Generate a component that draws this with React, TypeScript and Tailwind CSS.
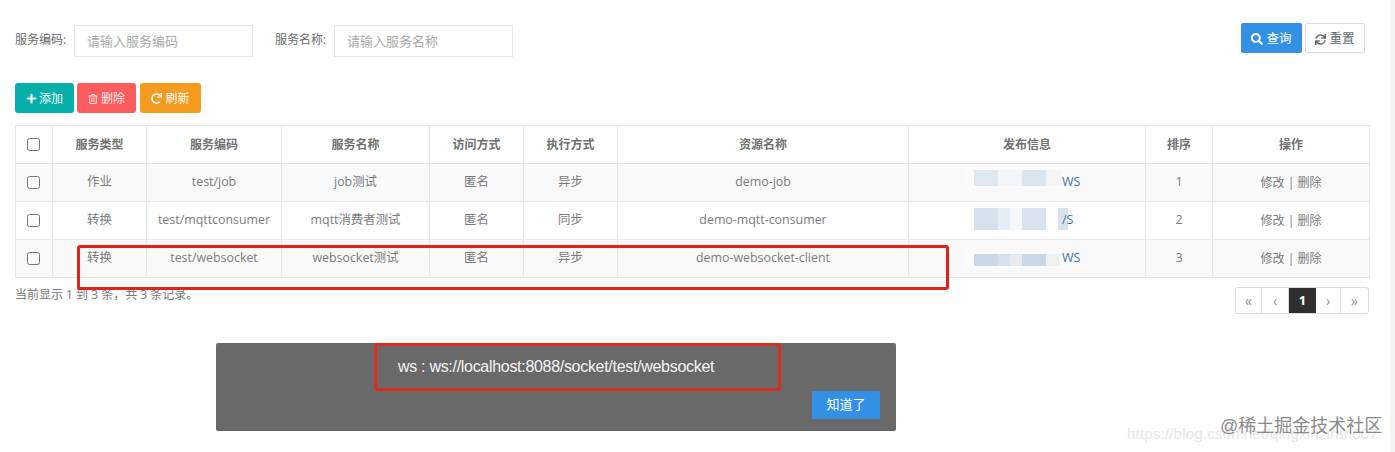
import { FaPlus, FaRegTrashAlt, FaRedo, FaSearch, FaSync } from "react-icons/fa";

const headers = ["服务类型", "服务编码", "服务名称", "访问方式", "执行方式", "资源名称", "发布信息", "排序", "操作"];
const widths = ["w-[37px]", "w-[94px]", "w-[135px]", "w-[148px]", "w-[94px]", "w-[94px]", "w-[291px]", "w-[237px]", "w-[67px]", "w-[157px]"];

type Seg = [string, string];
const rows: { c: string[]; n: number; top: string; h: string; wash: string; segs: Seg[]; bg: string }[] = [
  {
    c: ["作业", "test/job", "job测试", "匿名", "异步", "demo-job"],
    n: 1,
    top: "top-[6px]",
    h: "h-[16px]",
    wash: "top-0 h-[24px]",
    bg: "bg-[#f9f9f9]",
    segs: [
      ["w-[24px]", "bg-[#dfe8f1]"],
      ["w-[24px]", "bg-[#f2f5f9]"],
      ["w-[24px]", "bg-[#dbe5ef]"],
      ["w-[16px]", "bg-[#f3f5f7]"],
    ],
  },
  {
    c: ["转换", "test/mqttconsumer", "mqtt消费者测试", "匿名", "同步", "demo-mqtt-consumer"],
    n: 2,
    top: "top-[6px]",
    h: "h-[22px]",
    wash: "top-[2px] h-[30px]",
    bg: "bg-white",
    segs: [
      ["w-[24px]", "bg-[#d5e1ec]"],
      ["w-[12px]", "bg-[#e6edf4]"],
      ["w-[12px]", "bg-[#f4f7fb]"],
      ["w-[24px]", "bg-[#d9e3ed]"],
      ["w-[12px]", "bg-white"],
      ["w-[10px]", "bg-[#d8e2ec]"],
    ],
  },
  {
    c: ["转换", "test/websocket", "websocket测试", "匿名", "异步", "demo-websocket-client"],
    n: 3,
    top: "top-[14px]",
    h: "h-[12px]",
    wash: "top-[10px] h-[18px]",
    bg: "bg-[#f9f9f9]",
    segs: [
      ["w-[24px]", "bg-[#c9d8e6]"],
      ["w-[12px]", "bg-[#d5e1ec]"],
      ["w-[12px]", "bg-[#e6ebf0]"],
      ["w-[24px]", "bg-[#c9d8e6]"],
      ["w-[14px]", "bg-[#eef0f2]"],
    ],
  },
];

function Box() {
  return <span className="block w-[13px] h-[13px] border border-[#767676] rounded-[2.5px] bg-white ml-[11px]" />;
}

function Blur({ r }: { r: (typeof rows)[number] }) {
  return (
    <div className={`absolute left-[65px] ${r.top} ${r.h} flex`}>
      {r.segs.map((s, i) => (
        <span key={i} className={`${s[0]} ${s[1]} h-full`} />
      ))}
    </div>
  );
}

export default function App() {
  return (
    <div className="relative w-[1395px] h-[452px] overflow-hidden bg-white text-[13px] text-[#676a6c] font-['Open_Sans','Noto_Sans_CJK_SC',sans-serif]">
      <div className="w-[1390px] h-full pl-[15px] pr-[21px]">
        <div className="flex items-start pt-[23px] h-[83px]">
          <div className="flex items-center pt-[2px]">
            <span className="w-[59px] text-[12px] text-[#676a6c] -mt-[3px]">服务编码:</span>
            <span className="w-[179px] h-[32px] border border-[#e5e6e7] flex items-center pl-[12px] pt-[1px] text-[#a9a9a9] text-[13px]">请输入服务编码</span>
            <span className="w-[59px] ml-[22px] text-[12px] -mt-[3px]">服务名称:</span>
            <span className="w-[179px] h-[32px] border border-[#e5e6e7] flex items-center pl-[12px] pt-[1px] text-[#a9a9a9] text-[13px]">请输入服务名称</span>
          </div>
          <div className="ml-auto flex gap-[3px] mr-[4px]">
            <button className="w-[61px] h-[30px] pt-[2px] rounded-[2px] bg-[#3390e4] text-white text-[12.5px] flex items-center justify-center gap-[3px]">
              <FaSearch className="w-[12px] h-[12px]" />
              查询
            </button>
            <button className="w-[60px] h-[30px] pt-[2px] rounded-[2px] border border-[#dcdcdc] bg-white text-[#676a6c] text-[12.5px] flex items-center justify-center gap-[3px]">
              <FaSync className="w-[11px] h-[11px]" />
              重置
            </button>
          </div>
        </div>

        <div className="flex mb-[12px]">
          <button className="w-[59px] h-[30px] pt-[1px] rounded-[3px] bg-[#05afaa] text-white text-[12px] flex items-center justify-center gap-[2px]">
            <FaPlus className="w-[11px] h-[11px]" />
            添加
          </button>
          <button className="w-[59px] h-[30px] pt-[1px] ml-[3px] rounded-[3px] bg-[#fc5c5d] text-[#ffe9e9] text-[12px] flex items-center justify-center gap-[3px]">
            <FaRegTrashAlt className="w-[10px] h-[10px]" />
            删除
          </button>
          <button className="w-[61px] h-[30px] pt-[1px] ml-[4px] rounded-[3px] bg-[#f59b1d] text-white text-[12px] flex items-center justify-center gap-[3px]">
            <FaRedo className="w-[11px] h-[11px]" />
            刷新
          </button>
        </div>

        <table className="w-[1354px] table-fixed border-collapse border border-[#e7e7e7] text-center">
          <colgroup>
            {widths.map((w, i) => (
              <col key={i} className={w} />
            ))}
          </colgroup>
          <thead>
            <tr className="h-[38px] border-b border-[#e2e2e2]">
              <th className="border-r border-[#e7e7e7] p-0">
                <Box />
              </th>
              {headers.map((h, i) => (
                <th key={h} className={`p-0 font-semibold text-[12px] text-[#6f7173] ${i < 8 ? "border-r border-[#e7e7e7]" : ""}`}>
                  {h}
                </th>
              ))}
            </tr>
          </thead>
          <tbody>
            {rows.map((r) => (
              <tr key={r.n} className={`h-[38px] border-b border-[#e7e7e7] ${r.bg}`}>
                <td className="border-r border-[#e7e7e7] p-0">
                  <Box />
                </td>
                {r.c.map((t, i) => (
                  <td key={i} className="border-r border-[#e7e7e7] p-0 text-[#7a7c7e] text-[12.4px]">
                    {t}
                  </td>
                ))}
                <td className="relative border-r border-[#e7e7e7] p-0">
                  <div className={`absolute left-[56px] w-[98px] ${r.wash} ${r.n === 2 ? "bg-white" : "bg-[#fbfbfb]"}`} />
                  <Blur r={r} />
                  <span className="relative block pl-[153px] text-left text-[12.5px] text-[#3f74ab]">{r.n === 2 ? "/S" : "WS"}</span>
                </td>
                <td className="border-r border-[#e7e7e7] p-0 text-[12.5px] text-[#7a7c7e]">{r.n}</td>
                <td className="p-0 text-[12px] text-[#7a7c7e]">修改 | 删除</td>
              </tr>
            ))}
          </tbody>
        </table>

        <div className="flex items-start justify-between pt-[9px]">
          <span className="text-[12px] text-[#77797b] leading-[18px] -mt-[1px]">当前显示 1 到 3 条，共 3 条记录。</span>
          <div className="flex h-[27px] w-[134px] border border-[#dddddd] rounded-[3px] overflow-hidden text-[#8f8f8f] text-[14px] leading-none">
            <span className="w-[26px] flex items-center justify-center border-r border-[#dddddd]">«</span>
            <span className="w-[27px] flex items-center justify-center border-r border-[#dddddd]">‹</span>
            <span className="w-[27px] flex items-center justify-center bg-[#2f2f2f] text-white font-bold text-[13px]">1</span>
            <span className="w-[25px] flex items-center justify-center border-r border-[#dddddd]">›</span>
            <span className="flex-1 flex items-center justify-center">»</span>
          </div>
        </div>

        <div className="ml-[201px] mt-[29px] w-[680px] h-[88px] rounded-[2px] bg-[#696969] relative">
          <p className="pl-[182px] pt-[14px] text-[16px] leading-[20px] tracking-[-0.3px] text-[#f4f4f4] font-['Liberation_Sans','Noto_Sans_CJK_SC',sans-serif]">
            ws : ws://localhost:8088/socket/test/websocket
          </p>
          <button className="absolute left-[596px] top-[48px] w-[68px] h-[28px] bg-[#3390e4] text-white text-[13px] font-['Liberation_Sans','Noto_Sans_CJK_SC',sans-serif]">
            知道了
          </button>
          <div className="absolute left-[158px] top-[0px] w-[407px] h-[48px] border-[3px] border-[#db2c21] rounded-[3px]" />
        </div>
      </div>

      <div className="absolute right-0 top-0 w-[5px] h-full bg-[#f3f3f3]" />
      <div className="absolute left-[77px] top-[245px] w-[872px] h-[45px] border-[3px] border-[#e2231a] rounded-[3px]" />
      <span className="absolute left-[1127px] top-[424px] text-[15px] leading-[20px] text-[#e6e6e6] font-['Liberation_Sans',sans-serif] tracking-[0.2px]">
        https://blog.csdn.net/qingxinziran007
      </span>
      <span className="absolute left-[1220px] top-[414px] text-[18px] leading-[24px] text-[#8a8a8a] font-['Liberation_Sans','Noto_Sans_CJK_SC',sans-serif]">
        @稀土掘金技术社区
      </span>
    </div>
  );
}
